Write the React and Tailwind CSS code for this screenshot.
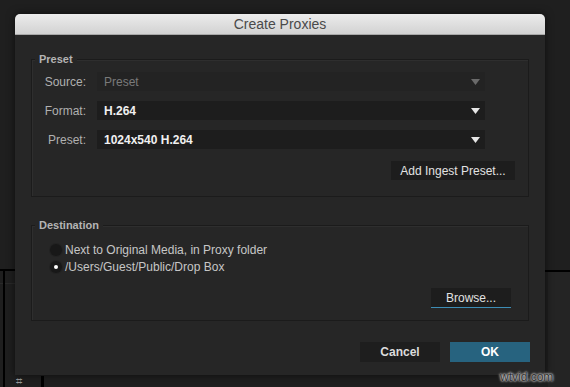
import React from 'react';

const font = { fontFamily: '"Liberation Sans", Arial, sans-serif' };

// Small dropdown caret as drawn in the Adobe dialog
const Caret = ({ dim }) => (
  <svg width="9" height="6" viewBox="0 0 9 6" className="shrink-0">
    <path d="M0 0 H9 L4.5 6 Z" fill={dim ? '#6a6a6a' : '#e6e6e6'} />
  </svg>
);

const Row = ({ label, value, disabled }) => (
  <div className="flex items-center h-[19px]">
    <div className="w-[56px] text-right pr-[11px] text-[12px] text-[#b0b0b0]">
      {label}
    </div>
    <div className={`w-[388px] h-[19px] flex items-center justify-between pl-[7px] pr-[5px] ${disabled ? 'bg-[#232323]' : 'bg-[#1d1d1d]'}`}>
      <span className={`text-[12px] ${disabled ? 'text-[#7a7a7a]' : 'text-[#f0f0f0] font-bold'}`}>{value}</span>
      <Caret dim={disabled} />
    </div>
  </div>
);

const Group = ({ title, className, children }) => (
  <div className={`relative mx-[16px] border border-[#1b1b1b] shadow-[inset_1px_1px_0_#2e2e2e] ${className}`}>
    <span className="absolute -top-[7px] left-[3px] px-[4px] bg-[#262626] text-[11px] leading-[12px] font-bold text-[#b4b4b4]">
      {title}
    </span>
    {children}
  </div>
);

const Radio = ({ checked, label }) => (
  <div className="flex items-center h-[17px]">
    <div className="w-[12px] h-[12px] rounded-full bg-[#181818] shadow-[0_0_0_1px_#222] flex items-center justify-center mr-[3px]">
      {checked && <div className="w-[4px] h-[4px] rounded-full bg-white" />}
    </div>
    <span className="text-[12px] text-[#c6c6c6]">{label}</span>
  </div>
);

export default function App() {
  return (
    <div className="relative w-[570px] h-[387px] bg-[#1f1f1f] overflow-hidden" style={font}>
      {/* background app behind the dialog */}
      <div className="absolute left-0 top-[269px] w-[15px] h-[2px] bg-black" />
      <div className="absolute left-0 top-[283px] w-[15px] h-px bg-[#2a2a2a]" />
      <div className="absolute left-[3px] top-[270px] w-[2px] h-[117px] bg-black" />
      <div className="absolute left-[41px] top-[376px] w-[3px] h-[11px] bg-black" />
      <div className="absolute left-[16px] top-[375px] text-[11px] leading-[12px] text-[#9a9a9a]">⌗</div>
      <div className="absolute left-[545px] top-[270px] w-[25px] h-[2px] bg-black" />
      <div className="absolute left-[548px] top-[272px] w-[22px] h-[115px] bg-[#242424]" />

      <div className="absolute left-[15px] top-[14px] w-[530px] h-[361px] flex flex-col bg-[#262626] rounded-t-[5px] shadow-[0_0_8px_rgba(0,0,0,0.6)]">
        <div className="h-[21px] shrink-0 rounded-t-[5px] bg-gradient-to-b from-[#ececec] to-[#d2d2d2] border-b border-[#a8a8a8] flex items-center justify-center">
          <span className="text-[14px] text-[#4a4a4a]">Create Proxies</span>
        </div>

        <Group title="Preset" className="mt-[24px] h-[138px]">
          <div className="flex flex-col gap-[10px] pt-[12px] pl-[9px]">
            <Row label="Source:" value="Preset" disabled />
            <Row label="Format:" value="H.264" />
            <Row label="Preset:" value="1024x540 H.264" />
          </div>
          <div className="flex justify-end pr-[13px] mt-[12px]">
            <div className="w-[124px] h-[19px] bg-[#1d1d1d] flex items-center justify-center text-[12px] text-[#e2e2e2]">
              Add Ingest Preset...
            </div>
          </div>
        </Group>

        <Group title="Destination" className="mt-[28px] h-[96px]">
          <div className="flex flex-col pt-[15px] pl-[18px]">
            <Radio label="Next to Original Media, in Proxy folder" />
            <Radio checked label="/Users/Guest/Public/Drop Box" />
          </div>
          <div className="flex justify-end pr-[17px] mt-[13px]">
            <div className="w-[80px] h-[20px] bg-[#1d1d1d] border-b border-[#3d8db5] flex items-center justify-center text-[12px] text-[#e2e2e2]">
              Browse...
            </div>
          </div>
        </Group>

        <div className="flex justify-end gap-[10px] pr-[15px] mt-[21px]">
          <div className="w-[80px] h-[20px] bg-[#1e1e1e] flex items-center justify-center text-[12px] font-bold text-[#dcdcdc]">
            Cancel
          </div>
          <div className="w-[80px] h-[20px] bg-[#27637f] flex items-center justify-center text-[12px] font-bold text-white">
            OK
          </div>
        </div>
      </div>

      <div className="absolute left-[500px] top-[371px] text-[12px] leading-[12px] text-[#333] [text-shadow:0_0_3px_#fff,0_0_2px_#fff]">
        wtvid.com
      </div>
    </div>
  );
}
